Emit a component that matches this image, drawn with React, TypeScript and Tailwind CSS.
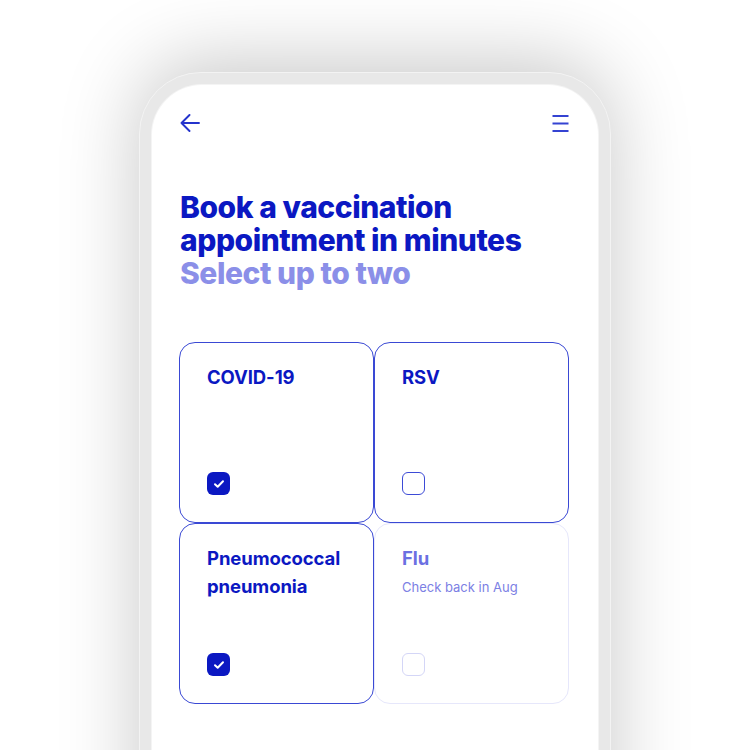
import React from "react";

const font = { fontFamily: "Inter, 'Noto Sans', sans-serif" };

function Check({ checked, faded }: { checked?: boolean; faded?: boolean }) {
  if (checked) {
    return (
      <div className="w-[23px] h-[23px] rounded-[6px] bg-[#0b18c2] flex items-center justify-center">
        <svg width="12" height="10" viewBox="0 0 12 10" fill="none">
          <path d="M2 5.2 L4.7 7.8 L10 2.3" stroke="white" strokeWidth="2" strokeLinecap="round" strokeLinejoin="round" />
        </svg>
      </div>
    );
  }
  return (
    <div
      className={
        "w-[23px] h-[23px] rounded-[6px] border-[1.5px] bg-white " +
        (faded ? "border-[#d4d6f7]" : "border-[#3d4bd6]")
      }
    />
  );
}

function Card({
  title,
  sub,
  checked,
  faded,
}: {
  title: React.ReactNode;
  sub?: string;
  checked?: boolean;
  faded?: boolean;
}) {
  return (
    <div
      className={
        "h-[181px] rounded-[16px] border-[1.5px] bg-white pl-[27px] pr-[20px] pt-[20px] pb-[27px] flex flex-col justify-between " +
        (faded ? "border-[#e6e7fb]" : "border-[#3a49d4]")
      }
    >
      <div>
        <div
          className={
            "text-[18.5px] font-bold leading-[28px] tracking-[-0.005em] " +
            (faded ? "text-[#6b70e2]" : "text-[#0b18c2]")
          }
        >
          {title}
        </div>
        {sub && <div className="text-[13px] leading-[18px] mt-[6px] text-[#7c80e4]">{sub}</div>}
      </div>
      <Check checked={checked} faded={faded} />
    </div>
  );
}

export default function App() {
  return (
    <div className="w-[750px] h-[750px] overflow-hidden bg-white flex justify-center pt-[72px]" style={font}>
      <div className="w-[472px] h-[820px] shrink-0 rounded-[62px] bg-[#e8e8e8] border border-[#f3f3f3] p-[12px] shadow-[0_-10px_80px_rgba(0,0,0,0.22)]">
        <div className="h-full rounded-[50px] bg-white ring-1 ring-[#f4f4f4] pl-[27px] pr-[25px] pt-[28px]">
          <div className="flex justify-between items-center h-[20px] pl-[1px] pr-[4px]">
            <svg width="20" height="18" viewBox="0 0 20 18" fill="none">
              <path d="M9.5 1 L1.5 9 L9.5 17 M1.5 9 H19" stroke="#2433cc" strokeWidth="1.9" strokeLinecap="round" strokeLinejoin="round" />
            </svg>
            <svg width="17" height="18" viewBox="0 0 17 18" fill="none">
              <path d="M0.5 2 H16.5 M0.5 9.5 H16.5 M0.5 17 H16.5" stroke="#3443d2" strokeWidth="2.2" />
            </svg>
          </div>
          <div className="mt-[58px] pl-[1px] text-[30px] font-extrabold leading-[33px] tracking-[-0.015em]">
            <div className="text-[#0b18c2]">Book a vaccination</div>
            <div className="text-[#0b18c2]">appointment in minutes</div>
            <div className="text-[#8b8fe8]">Select up to two</div>
          </div>
          <div className="mt-[52px] grid grid-cols-2 w-[390px]">
            <Card title="COVID-19" checked />
            <Card title="RSV" />
            <Card title={<>Pneumococcal<br />pneumonia</>} checked />
            <Card title="Flu" sub="Check back in Aug" faded />
          </div>
        </div>
      </div>
    </div>
  );
}
